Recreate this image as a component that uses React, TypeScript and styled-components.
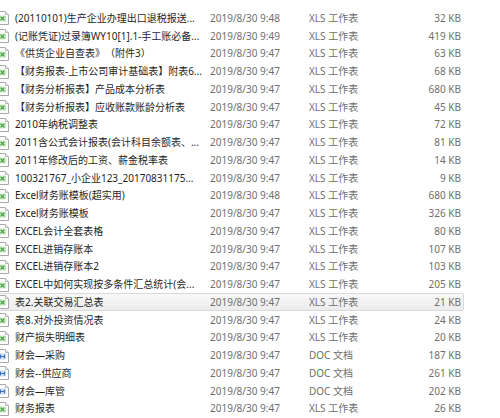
import styled, { createGlobalStyle } from "styled-components";

type Kind = "xls" | "doc";

interface FileItem {
  name: string;
  date: string;
  kind: Kind;
  size: string;
}

const files: FileItem[] = [
  { name: "(20110101)生产企业办理出口退税报送...", date: "2019/8/30 9:48", kind: "xls", size: "32 KB" },
  { name: "(记账凭证)过录簿WY10[1].1-手工账必备...", date: "2019/8/30 9:49", kind: "xls", size: "419 KB" },
  { name: "《供货企业自查表》（附件3）", date: "2019/8/30 9:47", kind: "xls", size: "63 KB" },
  { name: "【财务报表-上市公司审计基础表】附表6...", date: "2019/8/30 9:47", kind: "xls", size: "68 KB" },
  { name: "【财务分析报表】产品成本分析表", date: "2019/8/30 9:47", kind: "xls", size: "680 KB" },
  { name: "【财务分析报表】应收账款账龄分析表", date: "2019/8/30 9:47", kind: "xls", size: "45 KB" },
  { name: "2010年纳税调整表", date: "2019/8/30 9:47", kind: "xls", size: "72 KB" },
  { name: "2011含公式会计报表(会计科目余额表、...", date: "2019/8/30 9:47", kind: "xls", size: "81 KB" },
  { name: "2011年修改后的工资、薪金税率表", date: "2019/8/30 9:47", kind: "xls", size: "14 KB" },
  { name: "100321767_小企业123_20170831175...", date: "2019/8/30 9:47", kind: "xls", size: "9 KB" },
  { name: "Excel财务账模板(超实用)", date: "2019/8/30 9:48", kind: "xls", size: "680 KB" },
  { name: "Excel财务账模板", date: "2019/8/30 9:47", kind: "xls", size: "326 KB" },
  { name: "EXCEL会计全套表格", date: "2019/8/30 9:47", kind: "xls", size: "80 KB" },
  { name: "EXCEL进销存账本", date: "2019/8/30 9:47", kind: "xls", size: "107 KB" },
  { name: "EXCEL进销存账本2", date: "2019/8/30 9:47", kind: "xls", size: "103 KB" },
  { name: "EXCEL中如何实现按多条件汇总统计(会...", date: "2019/8/30 9:47", kind: "xls", size: "205 KB" },
  { name: "表2.关联交易汇总表", date: "2019/8/30 9:47", kind: "xls", size: "21 KB" },
  { name: "表8.对外投资情况表", date: "2019/8/30 9:47", kind: "xls", size: "24 KB" },
  { name: "财产损失明细表", date: "2019/8/30 9:47", kind: "xls", size: "20 KB" },
  { name: "财会—采购", date: "2019/8/30 9:47", kind: "doc", size: "187 KB" },
  { name: "财会--供应商", date: "2019/8/30 9:47", kind: "doc", size: "261 KB" },
  { name: "财会—库管", date: "2019/8/30 9:47", kind: "doc", size: "202 KB" },
  { name: "财务报表", date: "2019/8/30 9:47", kind: "xls", size: "26 KB" },
];

const typeLabel: Record<Kind, string> = {
  xls: "XLS 工作表",
  doc: "DOC 文档",
};

function FileIcon({ kind }: { kind: Kind }) {
  const xls = kind === "xls";
  return (
    <IconSvg width="12" height="14" viewBox="0 0 12 14">
      <path d="M0.5 0.5 H8.5 L11.5 3.5 V13.5 H0.5 Z" fill="#fdfdfd" stroke="#a9a9a9" />
      <path d="M8.5 0.5 V3.5 H11.5" fill="#eeeeee" stroke="#b9b9b9" />
      <rect x="2" y="4.5" width="7" height="6" rx="0.8" fill={xls ? "#c9e9c2" : "#c9dbf3"} />
      {xls ? (
        <path d="M3.6 5.6 L7.4 9.4 M7.4 5.6 L3.6 9.4" stroke="#3d9a3a" strokeWidth="1.1" />
      ) : (
        <path d="M3.5 5.6 V9.4 M7.5 5.6 V9.4 M3.5 7.5 H7.5" stroke="#3d6fbf" strokeWidth="1" />
      )}
    </IconSvg>
  );
}

export default function App() {
  return (
    <>
      <GlobalStyle />
      <ListView>
        {files.map((f, i) => (
          <Row key={i} $hover={i === 16}>
            <IconCell>
              <FileIcon kind={f.kind} />
            </IconCell>
            <NameCell>{f.name}</NameCell>
            <MetaCell>{f.date}</MetaCell>
            <MetaCell>{typeLabel[f.kind]}</MetaCell>
            <SizeCell>{f.size}</SizeCell>
          </Row>
        ))}
        <BottomEdge />
      </ListView>
    </>
  );
}

const GlobalStyle = createGlobalStyle`
  html, body {
    margin: 0;
    padding: 0;
    background: #ffffff;
  }
  body {
    font-family: "Noto Sans", "Noto Sans CJK SC", sans-serif;
    text-spacing-trim: space-all;
  }
`;

const ListView = styled.div`
  width: 500px;
  height: 418px;
  overflow: hidden;
  padding-top: 9.4px;
  box-sizing: border-box;
  background: #ffffff;
`;

const Row = styled.div<{ $hover?: boolean }>`
  display: grid;
  grid-template-columns: 15px 195px 99px 110px 42px;
  align-items: center;
  width: 464px;
  height: 17.75px;
  box-sizing: border-box;
  font-size: 10px;
  line-height: 15px;
  white-space: nowrap;
  border: 1px solid ${(p) => (p.$hover ? "#dadada" : "transparent")};
  border-left: none;
  border-radius: 0 2px 2px 0;
  background: ${(p) =>
    p.$hover ? "linear-gradient(#f8f8f8, #ececec)" : "transparent"};
`;

const IconCell = styled.div`
  display: flex;
  align-items: center;
  margin-left: -3px;
`;

const IconSvg = styled.svg`
  display: block;
`;

const NameCell = styled.div`
  color: #1f1f1f;
`;

const MetaCell = styled.div`
  color: #6f6f6f;
`;

const SizeCell = styled.div`
  color: #6f6f6f;
  text-align: right;
`;

const BottomEdge = styled.div`
  margin-top: 4px;
  height: 1px;
  background: #d6e5f5;
`;
